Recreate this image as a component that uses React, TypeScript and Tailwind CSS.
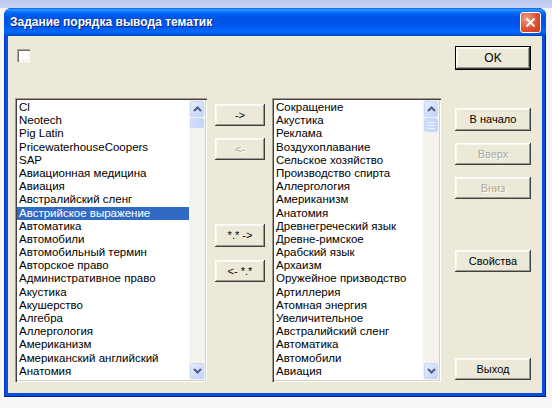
import React from 'react';

const leftItems = [
  'Cl',
  'Neotech',
  'Pig Latin',
  'PricewaterhouseCoopers',
  'SAP',
  'Авиационная медицина',
  'Авиация',
  'Австралийский сленг',
  'Австрийское выражение',
  'Автоматика',
  'Автомобили',
  'Автомобильный термин',
  'Авторское право',
  'Административное право',
  'Акустика',
  'Акушерство',
  'Алгебра',
  'Аллергология',
  'Американизм',
  'Американский английский',
  'Анатомия',
];

const rightItems = [
  'Сокращение',
  'Акустика',
  'Реклама',
  'Воздухоплавание',
  'Сельское хозяйство',
  'Производство спирта',
  'Аллергология',
  'Американизм',
  'Анатомия',
  'Древнегреческий язык',
  'Древне-римское',
  'Арабский язык',
  'Архаизм',
  'Оружейное призводство',
  'Артиллерия',
  'Атомная энергия',
  'Увеличительное',
  'Австралийский сленг',
  'Автоматика',
  'Автомобили',
  'Авиация',
];

type BtnProps = {
  label: string;
  disabled?: boolean;
  isDefault?: boolean;
  className?: string;
};

// classic raised 3d button on the beige dialog face
function WinButton({ label, disabled, isDefault, className = '' }: BtnProps) {
  const frame = isDefault ? 'border border-black' : '';
  const text = disabled
    ? 'text-[#aca899] [text-shadow:1px_1px_0_#ffffff]'
    : 'text-black';
  return (
    <button
      className={`${frame} ${text} ${className} flex items-center justify-center bg-[#ece9d8] text-[11px] leading-none shadow-[inset_-1px_-1px_0_#404040,inset_1px_1px_0_#ffffff,inset_-2px_-2px_0_#9d9a8c,inset_2px_2px_0_#f7f6f0]`}
    >
      {label}
    </button>
  );
}

function Chevron({ up }: { up?: boolean }) {
  return (
    <svg width="9" height="6" viewBox="0 0 9 6">
      <path
        d={up ? 'M1 5 L4.5 1.5 L8 5' : 'M1 1 L4.5 4.5 L8 1'}
        fill="none"
        stroke="#4d6185"
        strokeWidth="2"
      />
    </svg>
  );
}

function ScrollBtn({ up }: { up?: boolean }) {
  return (
    <div className="mx-[1px] flex h-[16px] items-center justify-center rounded-[2px] border border-[#c8d6f8] bg-[linear-gradient(135deg,#e6eefc,#c1d3fb)]">
      <Chevron up={up} />
    </div>
  );
}

function ScrollBar({ thumb }: { thumb: number }) {
  return (
    <div className="flex w-[16px] flex-col bg-[#f4f3ee] py-[1px]">
      <ScrollBtn up />
      <div
        className="mx-[1px] mt-[1px] flex flex-col items-center justify-center gap-[2px] rounded-[2px] border border-[#c8d6f8] bg-[linear-gradient(90deg,#d2defb,#c3d4fb)]"
        style={{ height: thumb }}
      >
        {thumb > 11 && (
          <>
            <div className="h-px w-[7px] bg-[#eef3fe]" />
            <div className="h-px w-[7px] bg-[#eef3fe]" />
            <div className="h-px w-[7px] bg-[#eef3fe]" />
          </>
        )}
      </div>
      <div className="flex-1" />
      <ScrollBtn />
    </div>
  );
}

function ListBox({
  items,
  selected,
  className = '',
}: {
  items: string[];
  selected?: number;
  className?: string;
}) {
  return (
    <div
      className={`${className} flex h-[284px] bg-white p-[2px] shadow-[inset_1px_1px_0_#a09d8f,inset_2px_2px_0_#404040,inset_-1px_-1px_0_#ffffff,inset_-2px_-2px_0_#d4d0c8]`}
    >
      <div className="flex-1 overflow-hidden pt-[1px]">
        {items.map((it, i) => (
          <div
            key={it + i}
            className={`h-[13.2px] whitespace-nowrap pl-[2px] text-[11.5px] leading-[13.2px] ${
              i === selected ? 'bg-[#316ac5] text-white' : 'text-black'
            }`}
          >
            {it}
          </div>
        ))}
      </div>
      <ScrollBar thumb={selected !== undefined ? 10 : 14} />
    </div>
  );
}

export default function App() {
  return (
    <div className="h-[408px] w-[552px] overflow-hidden bg-[linear-gradient(to_bottom,#bccbf1_0px,#c6d3f4_8px,#f6f6f6_8px)] pl-[4px] pt-[8px] font-['Liberation_Sans',Arial,sans-serif]">
      <div className="flex h-[389px] w-[542px] flex-col overflow-hidden rounded-t-[8px] bg-[#0a4cdc] shadow-[inset_0_-1px_0_#001f8a,inset_1px_0_0_#0839c0,inset_-1px_0_0_#001f8a]">
        {/* title bar */}
        <div className="flex h-[28px] items-center justify-between bg-[linear-gradient(to_bottom,#0058ee_0%,#3593ff_5%,#288eff_8%,#127dff_12%,#036ffc_16%,#0262ee_22%,#0057e5_30%,#0054e3_40%,#0055eb_60%,#005bf5_72%,#026afe_82%,#0062ef_90%,#0052d6_96%,#0040ab_100%)] pl-[6px] pr-[5px]">
          <span className="text-[12px] font-bold text-white [text-shadow:1px_1px_0_#0f1f7a]">
            Задание порядка вывода тематик
          </span>
          <div className="flex h-[21px] w-[21px] items-center justify-center rounded-[3px] border border-white bg-[radial-gradient(circle_at_30%_30%,#f0a08a,#e0502e_55%,#c5391a)]">
            <svg width="11" height="11" viewBox="0 0 11 11">
              <path d="M1.5 1.5 L9.5 9.5 M9.5 1.5 L1.5 9.5" stroke="#ffffff" strokeWidth="2" />
            </svg>
          </div>
        </div>

        {/* client area */}
        <div className="mx-[4px] mb-[4px] flex flex-1 bg-[#ece9d8] pl-[7px] pr-[11px]">
          <div className="flex flex-col">
            <div className="ml-[2px] mt-[13px] h-[13px] w-[13px] bg-white shadow-[inset_1px_1px_0_#aca899,inset_2px_2px_0_#716f64,inset_-1px_-1px_0_#ffffff,inset_-2px_-2px_0_#f1efe2]" />

            <div className="mt-[36px] flex">
              <ListBox items={leftItems} selected={8} className="w-[192px]" />

              <div className="ml-[8px] flex w-[50px] flex-col pt-[6px]">
                <WinButton label="->" className="h-[22px] w-[50px]" />
                <WinButton label="<-" disabled className="mt-[12px] h-[22px] w-[50px]" />
                <WinButton label="*.* ->" className="mt-[64px] h-[23px] w-[50px]" />
                <WinButton label="<- *.*" className="mt-[13px] h-[22px] w-[50px]" />
              </div>

              <ListBox items={rightItems} className="ml-[7px] w-[169px]" />
            </div>
          </div>

          <div className="ml-[14px] flex flex-col pt-[10px]">
            <WinButton label="OK" isDefault className="h-[24px] w-[76px] text-[12px]" />
            <WinButton label="В начало" className="mt-[38px] h-[23px] w-[76px]" />
            <WinButton label="Вверх" disabled className="mt-[12px] h-[22px] w-[76px]" />
            <WinButton label="Вниз" disabled className="mt-[12px] h-[22px] w-[76px]" />
            <WinButton label="Свойства" className="mt-[51px] h-[22px] w-[76px]" />
            <WinButton label="Выход" className="mt-[86px] h-[22px] w-[76px]" />
          </div>
        </div>
      </div>
    </div>
  );
}
